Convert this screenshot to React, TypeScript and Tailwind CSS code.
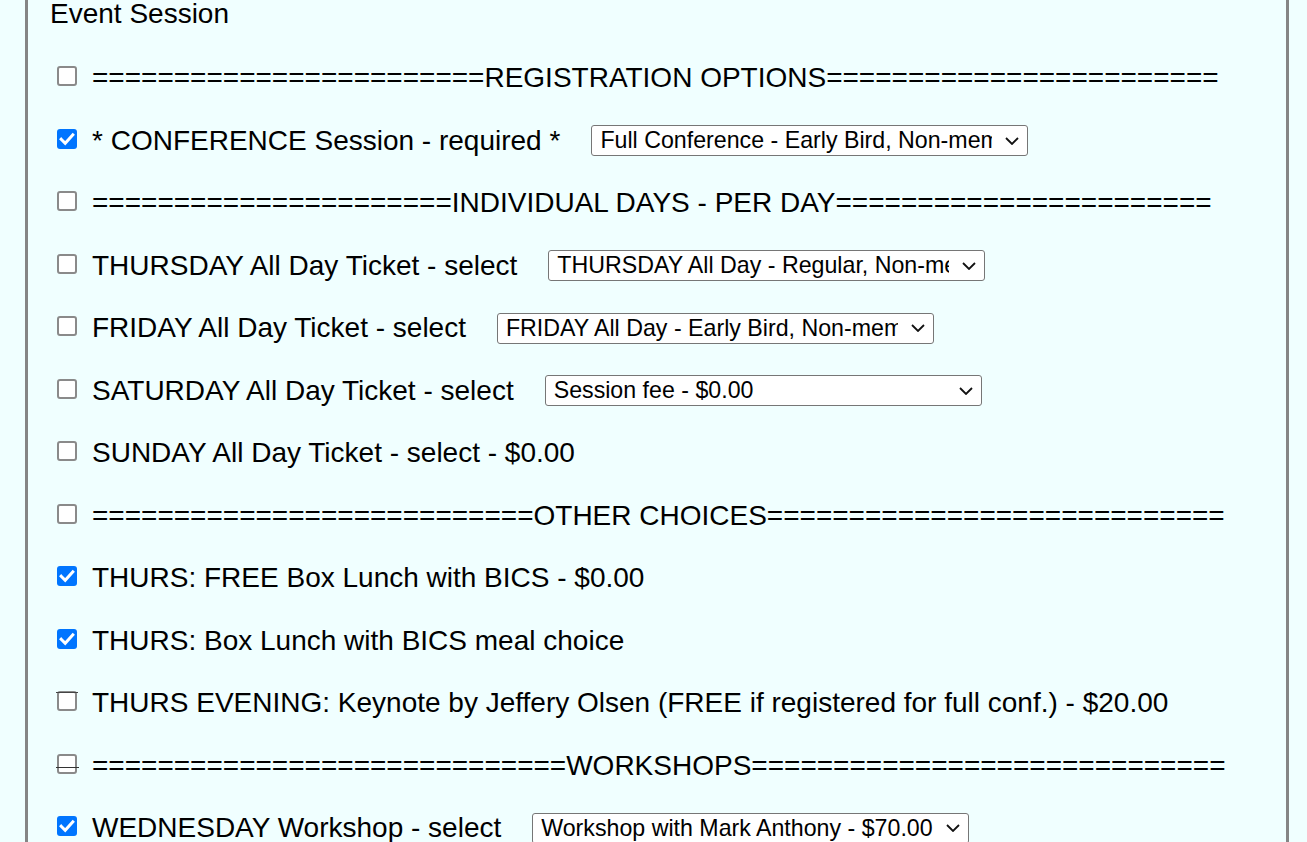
import React from 'react';

type Row = {
  checked: boolean;
  label: string;
  select?: string;
  glitch?: 'top' | 'low';
};

const eq = (n: number) => '='.repeat(n);

const rows: Row[] = [
  { checked: false, label: `${eq(24)}REGISTRATION OPTIONS${eq(24)}` },
  {
    checked: true,
    label: '* CONFERENCE Session - required *',
    select: 'Full Conference - Early Bird, Non-member - $395.00',
  },
  { checked: false, label: `${eq(22)}INDIVIDUAL DAYS - PER DAY${eq(23)}` },
  {
    checked: false,
    label: 'THURSDAY All Day Ticket - select',
    select: 'THURSDAY All Day - Regular, Non-member - $175.00',
  },
  {
    checked: false,
    label: 'FRIDAY All Day Ticket - select',
    select: 'FRIDAY All Day - Early Bird, Non-member - $150.00',
  },
  {
    checked: false,
    label: 'SATURDAY All Day Ticket - select',
    select: 'Session fee - $0.00',
  },
  { checked: false, label: 'SUNDAY All Day Ticket - select - $0.00' },
  { checked: false, label: `${eq(27)}OTHER CHOICES${eq(28)}` },
  { checked: true, label: 'THURS: FREE Box Lunch with BICS - $0.00' },
  { checked: true, label: 'THURS: Box Lunch with BICS meal choice' },
  {
    checked: false,
    label: 'THURS EVENING: Keynote by Jeffery Olsen (FREE if registered for full conf.) - $20.00',
    glitch: 'top',
  },
  { checked: false, label: `${eq(29)}WORKSHOPS${eq(29)}`, glitch: 'low' },
  {
    checked: true,
    label: 'WEDNESDAY Workshop - select',
    select: 'Workshop with Mark Anthony - $70.00',
  },
  { checked: false, label: 'WEDNESDAY EVENING: Dinner with speakers - $45.00' },
];

function Checkbox({ checked, glitch }: { checked: boolean; glitch?: 'top' | 'low' }) {
  return (
    <span className="relative mb-1 shrink-0">
      {checked ? (
        <span className="flex h-[20px] w-[20px] items-center justify-center rounded-[3px] bg-[#0075ff]">
          <svg width="20" height="20" viewBox="0 0 20 20" fill="none">
            <path d="M4.2 10.2 L8.2 14.2 L15.8 5.8" stroke="#fff" strokeWidth="3" strokeLinecap="square" />
          </svg>
        </span>
      ) : (
        <span className="block h-[20px] w-[20px] rounded-[3px] border-2 border-[#8a8a8a] bg-white" />
      )}
      {glitch === 'top' && (
        <span className="absolute left-[-1px] top-[1px] h-px w-[22px] bg-[#444]" />
      )}
      {glitch === 'low' && (
        <span className="absolute left-[-1px] top-[13px] h-px w-[23px] bg-[#333]" />
      )}
    </span>
  );
}

function FakeSelect({ value }: { value: string }) {
  return (
    <div className="ml-[31px] flex h-[31px] w-[437px] shrink-0 items-center rounded-[3px] border border-[#767676] bg-white pl-[8px] pr-[8px] text-[23.2px] text-black">
      <span className="flex-1 overflow-hidden whitespace-nowrap">{value}</span>
      <svg className="ml-[13px] shrink-0" width="14" height="8" viewBox="0 0 14 8" fill="none">
        <path d="M1 1 L7 7 L13 1" stroke="#111" strokeWidth="1.8" />
      </svg>
    </div>
  );
}

export default function App() {
  return (
    <div className="h-[842px] w-full overflow-hidden bg-[#f0ffff] font-['Liberation_Sans',Arial,sans-serif] text-black">
      <div className="ml-[25px] mr-[18px] min-h-[900px] border-x-[3px] border-[#858585]">
        <div className="-mt-[2px] h-[32px] pl-[22px] text-[28px] leading-[32px]">Event Session</div>

        <div className="mt-[17px] flex flex-col pl-[29px]">
          {rows.map((row, i) => (
            <div key={i} className="flex h-[62.5px] items-center">
              <Checkbox checked={row.checked} glitch={row.glitch} />
              <span className="ml-[15px] whitespace-nowrap text-[28px]">{row.label}</span>
              {row.select && <FakeSelect value={row.select} />}
            </div>
          ))}
        </div>
      </div>
    </div>
  );
}
